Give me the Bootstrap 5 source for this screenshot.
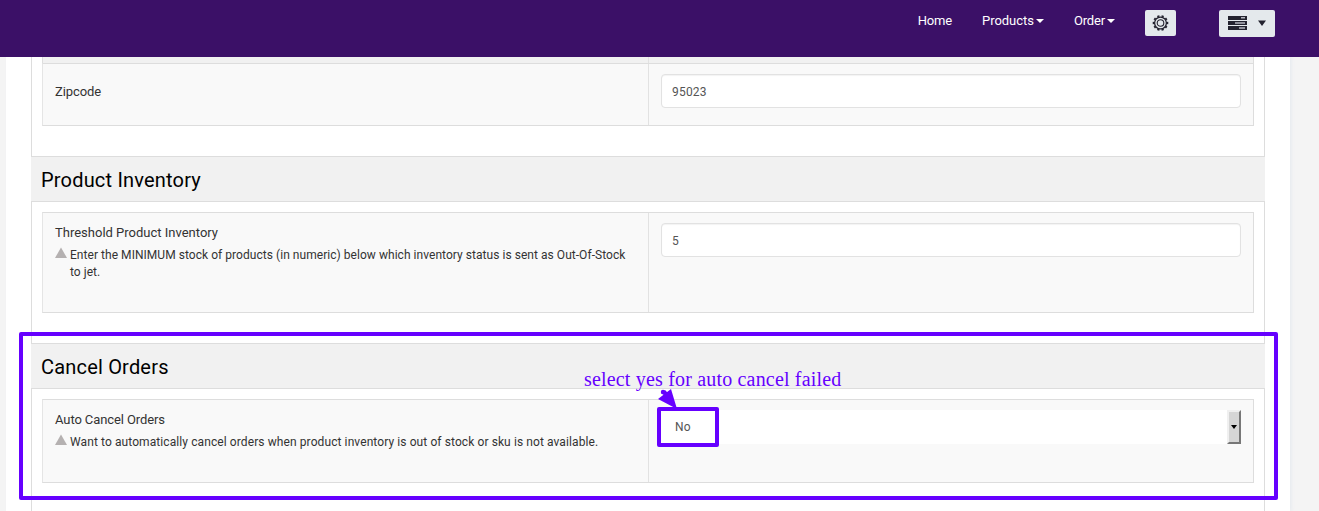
<!DOCTYPE html>
<html lang="en">
<head>
<meta charset="utf-8">
<meta name="viewport" content="width=device-width, initial-scale=1">
<title>Configuration</title>
<link href="https://cdn.jsdelivr.net/npm/bootstrap@5.3.0/dist/css/bootstrap.min.css" rel="stylesheet">
<style>
body{font-family:Roboto,"Liberation Sans",sans-serif;font-size:13px;line-height:17px;color:#333;background:#f4f4f4;height:511px;overflow:hidden}
.topbar{background:#3b1067;height:57px;padding:0 44px 0 0;z-index:1}
.topbar .nav-link{color:#fff;padding:0;line-height:20px;margin-top:11px;white-space:nowrap;letter-spacing:-.15px}
.topbar .nav-link+.nav-link{margin-left:30px}
.topbar .nav-wide{letter-spacing:-.04px}
.caret{display:inline-block;border:4px solid transparent;border-top-color:#fff;border-bottom:0;vertical-align:2px;margin-left:2px}
.tool{background:#e4e9ec;border:0;border-radius:2px;padding:0;color:#23232f}
.tool-gear{width:31px;height:26px;margin:10px 0 0 30px}
.tool-menu{width:56px;height:27px;margin:10px 0 0 43px}
.sheet{width:1284px;height:454px;margin-left:6px;padding:0 25px;box-shadow:2px 0 3px #e9ecf0}
.panel-body{border:1px solid #ddd;border-top:0;padding:10px 10px 30px}
.panel-title{background:#f1f1f1;height:44px;padding:0 10px;font-size:20px;line-height:46px;color:#000;letter-spacing:.19px}
.panel-title+.panel-body{border-top:1px solid #ddd}
.grid-row{border:1px solid #ddd;border-left-color:#e5e5e5;background:#f9f9f9}
.cell-label{width:606px;border-right:1px solid #e2e2e2;padding:11px 20px 0 12px}
.label-tight{letter-spacing:-.1px}
.cell-field{padding:10px 12px 0}
.strip{height:6px;background:#f1f1f1;border:1px solid #ddd;border-width:0 1px}
.strip span{width:606px;border-right:1px solid #e2e2e2}
.form-control.field{height:34px;padding:2px 10px 0;font-size:12px;letter-spacing:.2px;color:#555;border:1px solid #e2e2e2;border-radius:4px;box-shadow:inset 0 1px 1px rgba(0,0,0,.05)}
.hint{font-size:12px;margin-top:6px;letter-spacing:.045px}
.hint-wide{letter-spacing:.095px}
.hint svg{flex:none;margin:0 3px 0 0}
.picker{height:34px;color:#555;font-size:12px;padding-left:14px;letter-spacing:.2px}
.picker-arrow{width:14px;height:34px;background:#d6d6d6;border:2px solid;border-color:#f0f0f0 #777 #777 #f0f0f0}
.mark-box{border:4px solid #60f;border-radius:2px}
.mark-section{left:19px;top:332px;width:1259px;height:168px}
.mark-value{left:657px;top:407px;width:62px;height:40px}
.mark-note{left:584px;top:368px;font:20px/23px "Liberation Serif",serif;letter-spacing:.18px;color:#60f;white-space:nowrap}
.mark-arrow{left:656px;top:388px}
</style>
</head>
<body class="position-relative">
<nav class="topbar position-relative d-flex justify-content-end align-items-start">
  <a class="nav-link" href="#">Home</a>
  <a class="nav-link nav-wide" href="#">Products<span class="caret"></span></a>
  <a class="nav-link" href="#">Order<span class="caret"></span></a>
  <button class="tool tool-gear d-flex align-items-center justify-content-center" aria-label="Settings">
    <svg width="17" height="16" viewBox="0 0 17 16" fill="none" stroke="#23232f"><circle cx="8.500" cy="8" r="3.300" stroke-width="1.100"/><circle cx="8.500" cy="8" r="5.900" stroke-width="1.300"/><circle cx="8.500" cy="8" r="7" stroke-width="1.600" pathLength="80" stroke-dasharray="4 4" stroke-dashoffset="2"/></svg>
  </button>
  <button class="tool tool-menu d-flex" aria-label="Menu">
    <svg width="56" height="27" viewBox="0 0 56 27"><path fill="#23232f" d="M9 6h19v4H9zM9 11h19v4H9zM9 16h19v4H9zM39 10.500h8L43 16z"/><path fill="#b4b6be" d="M22 7h4v1.500h-4zM16 12.200h10v1.500H16zM20 17.200h6v1.500h-6z"/></svg>
  </button>
</nav>
<main class="sheet bg-white">
  <section class="panel-body pt-0">
    <div class="strip d-flex"><span></span></div>
    <div class="grid-row d-flex" style="height:63px">
      <div class="cell-label label-tight" style="padding-top:19px">Zipcode</div>
      <div class="cell-field flex-fill"><input class="form-control field" value="95023" aria-label="Zipcode"></div>
    </div>
  </section>
  <h2 class="panel-title fw-normal m-0">Product Inventory</h2>
  <section class="panel-body">
    <div class="grid-row d-flex" style="height:101px">
      <div class="cell-label"><div>Threshold Product Inventory</div>
        <div class="hint d-flex"><svg width="12" height="12"><path fill="#b5b1b1" d="M6 .500 12 11H0z"/></svg><div>Enter the MINIMUM stock of products (in numeric) below which inventory status is sent as Out-Of-Stock<br>to jet.</div></div>
      </div>
      <div class="cell-field flex-fill"><input class="form-control field" value="5" aria-label="Threshold"></div>
    </div>
  </section>
  <h2 class="panel-title fw-normal m-0">Cancel Orders</h2>
  <section class="panel-body">
    <div class="grid-row d-flex" style="height:84px">
      <div class="cell-label"><div class="label-tight">Auto Cancel Orders</div>
        <div class="hint hint-wide d-flex"><svg width="12" height="12"><path fill="#b5b1b1" d="M6 .500 12 11H0z"/></svg><div>Want to automatically cancel orders when product inventory is out of stock or sku is not available.</div></div>
      </div>
      <div class="cell-field flex-fill">
        <div class="picker bg-white d-flex align-items-center justify-content-between"><span>No</span><span class="picker-arrow d-flex align-items-center justify-content-center"><svg width="6" height="4"><path d="M0 0h6L3 4z"/></svg></span></div>
      </div>
    </div>
  </section>
</main>
<div class="mark-box mark-section position-absolute"></div>
<div class="mark-note position-absolute">select yes for auto cancel failed</div>
<svg class="mark-arrow position-absolute" width="24" height="22" fill="#60f"><circle cx="7" cy="4" r="2.200"/><path d="M5 5 9 2l3 3-3 3zM15 1 21 21 2 11z"/></svg>
<div class="mark-box mark-value position-absolute"></div>
<script src="https://cdn.jsdelivr.net/npm/bootstrap@5.3.0/dist/js/bootstrap.bundle.min.js"></script>
</body>
</html>
